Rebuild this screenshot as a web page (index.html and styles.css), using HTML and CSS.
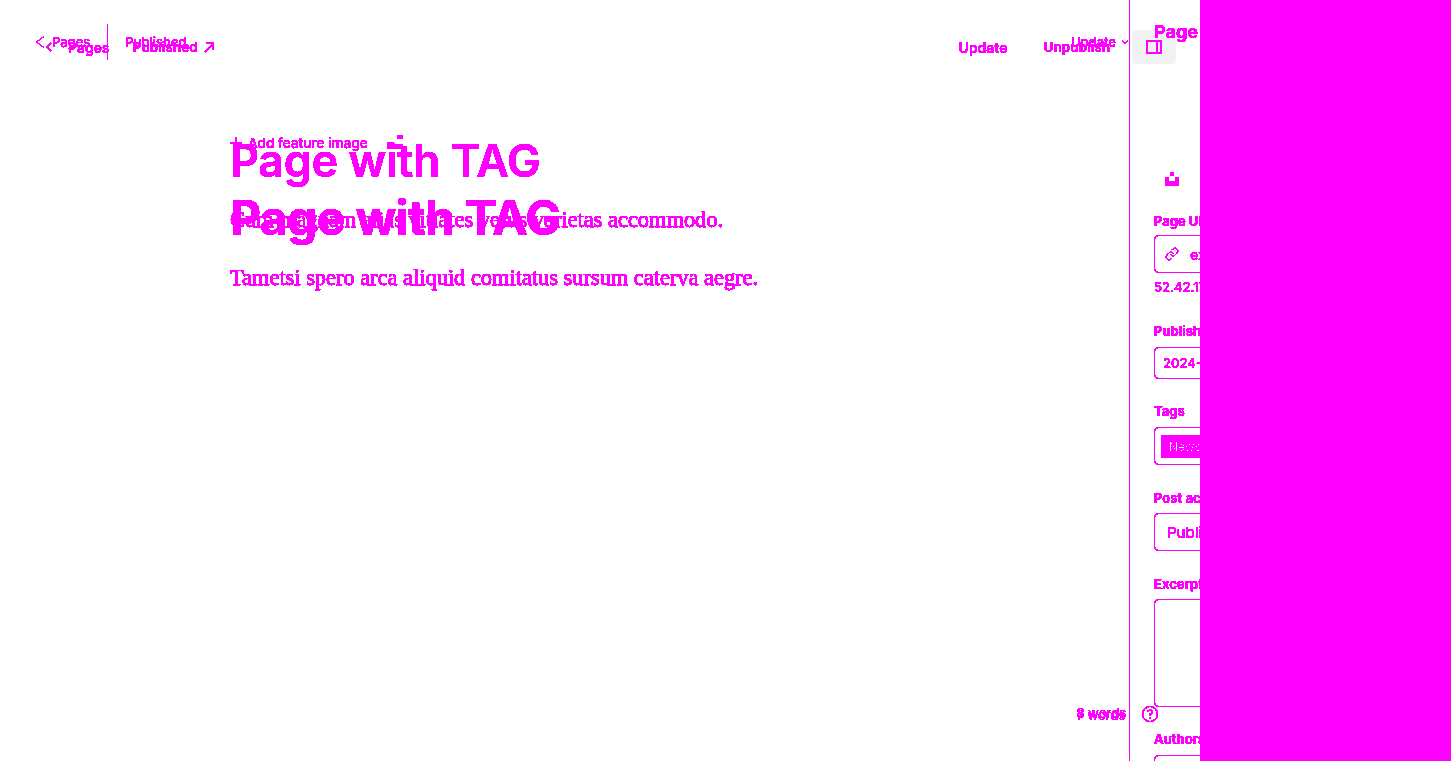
FILE: index.html
```html
<!DOCTYPE html>
<html lang="en">
<head>
<meta charset="UTF-8">
<title>Page with TAG</title>
<link rel="stylesheet" href="styles.css">
</head>
<body>
<!-- hard edges on text and icons, no soft pixels -->
<svg class="defs" width="0" height="0">
    <filter id="crisp" color-interpolation-filters="sRGB" x="0" y="0" width="100%" height="100%">
        <feComponentTransfer>
            <feFuncG type="discrete" tableValues="0 0 0 0 0 0 0 0 0 1"/>
            <feFuncA type="discrete" tableValues="0 1 1 1 1 1 1 1 1 1"/>
        </feComponentTransfer>
    </filter>
</svg>
<div class="page">
    <div class="toggle"></div>

    <!-- first copy of the editor -->
    <div class="layer under">
        <div class="topbar">
            <svg class="ico" width="8" height="10" viewBox="0 0 8 10"><path d="M6 1 L2 5 L6 9"/></svg>
            <span class="crumb">Pages</span>
            <span class="status">Published</span>
            <svg class="ico" width="12" height="12" viewBox="0 0 12 12"><path d="M2 11 L10 3 M3 2 H10 V9"/></svg>
            <span class="grow"></span>
            <span class="action">Update</span>
            <span class="action second">Unpublish</span>
        </div>
        <h1 class="title big">Page with TAG</h1>
    </div>

    <!-- second copy, drawn over the first -->
    <div class="layer over">
        <div class="main">
            <div class="topbar thin">
                <svg class="ico light" width="12" height="16" viewBox="0 0 12 16"><path d="M9 2.5 L1.5 8 L9 13.5"/></svg>
                <span class="crumb">Pages</span>
                <span class="divider"></span>
                <span class="status">Published</span>
                <span class="grow"></span>
                <span class="action">Update</span>
                <svg class="ico light" width="8" height="6" viewBox="0 0 8 6"><path d="M1 1 L4 4.5 L7 1"/></svg>
            </div>
            <div class="editor">
                <div class="add-image">
                    <svg class="ico light" width="12" height="12" viewBox="0 0 12 12"><path d="M6 0 V12 M0 6 H12"/></svg>
                    <span>Add feature image</span>
                    <svg class="upload-small" width="16" height="14" viewBox="0 0 16 14"><path d="M10 0 H16 V4 H10 Z M0 7 H4 V9 H16 V14 H0 Z"/></svg>
                </div>
                <h1 class="title">Page with TAG</h1>
                <p class="body-text">Cum magnam alias vitiates verus varietas accommodo.</p>
                <p class="body-text">Tametsi spero arca aliquid comitatus sursum caterva aegre.</p>
            </div>
            <div class="count">
                <span class="words">8 words</span>
                <span class="words on-top">7 words</span>
                <svg class="ico mid" width="18" height="18" viewBox="0 0 18 18"><circle cx="9" cy="9" r="7.5"/><path d="M6.8 7 A2.2 2.2 0 1 1 9 9.4 V10.6 M9 12.4 V13.6"/></svg>
            </div>
        </div>
        <aside class="sidebar">
            <svg class="ico panel-ico" width="16" height="14" viewBox="0 0 16 14"><rect x="1" y="1" width="14" height="12"/><path d="M11 1 V13"/></svg>
            <h2 class="side-title">Page settings</h2>
            <div class="upload"><svg width="14" height="14" viewBox="0 0 14 14"><path d="M5 0 H9 V4 H5 Z M0 5 H4 V9 H10 V5 H14 V14 H0 Z"/></svg></div>
            <label class="field-label first">Page URL</label>
            <div class="box url">
                <svg class="ico link-ico" width="14" height="14" viewBox="0 0 24 24"><path d="M10 13a5 5 0 0 0 7.54.54l3-3a5 5 0 0 0-7.07-7.07l-1.72 1.71"/><path d="M14 11a5 5 0 0 0-7.54-.54l-3 3a5 5 0 0 0 7.07 7.07l1.71-1.71"/></svg>
                <span>example</span>
            </div>
            <div class="hint">52.42.179.8/page</div>
            <label class="field-label after-hint">Publish date</label>
            <div class="box date"><span>2024-01-01</span></div>
            <label class="field-label">Tags</label>
            <div class="box tags"><span class="tag">News</span></div>
            <label class="field-label low">Post access</label>
            <div class="box access tight"><span>Public</span></div>
            <label class="field-label low">Excerpt</label>
            <div class="box excerpt tight"></div>
            <label class="field-label">Authors</label>
            <div class="box authors"></div>
        </aside>
        <div class="cover"></div>
    </div>
</div>
</body>
</html>
```

FILE: styles.css
```css
html, body {
    margin: 0;
    height: 100%;
    background: #fff;
}
body {
    font-family: Inter, "Liberation Sans", sans-serif;
    color: #f0f;
    overflow: hidden;
}
.defs {
    position: absolute;
}
.page {
    position: relative;
    width: 1451px;
    height: 761px;
    overflow: hidden;
}
.layer {
    position: absolute;
    top: 0;
    left: 0;
    width: 100%;
    height: 100%;
    filter: url(#crisp);
}
.ico {
    fill: none;
    stroke: #f0f;
    stroke-width: 2;
    flex: none;
}
.ico.light {
    stroke-width: 0.9;
}
.ico.mid {
    stroke-width: 1.2;
}
.ico.link-ico {
    stroke-width: 1.6;
}
.grow {
    flex: 1;
}

/* under layer */
.under .topbar {
    display: flex;
    align-items: center;
    height: 20px;
    padding: 37px 341px 0 45px;
    font-size: 13.6px;
    font-weight: 600;
}
.under .crumb {
    margin-left: 15px;
    font-size: 14px;
}
.under .status {
    margin-left: 23px;
    margin-right: 5px;
}
.under .action {
    font-size: 14px;
}
.under .second {
    margin-left: 36px;
    font-size: 13.6px;
}
.title {
    margin: 0;
    font-size: 45px;
    font-weight: 600;
    line-height: 54px;
    letter-spacing: -0.4px;
}
.title.big {
    margin: 134px 0 0 230px;
    font-weight: 700;
    font-size: 48px;
    letter-spacing: -0.65px;
}

/* over layer */
.over {
    display: flex;
}
.main {
    position: relative;
    width: 1129px;
    display: flex;
    flex-direction: column;
}
.thin {
    display: flex;
    align-items: center;
    height: 36px;
    padding: 24px 0 0 35px;
    font-size: 13px;
    font-weight: 500;
}
.thin .crumb {
    margin-left: 5px;
}
.divider {
    width: 1px;
    height: 36px;
    margin: 0 17px;
    background: #f0f;
}
.thin .action {
    margin-right: 5px;
}
.editor {
    padding: 75px 0 0 230px;
}
.add-image {
    display: flex;
    align-items: center;
    gap: 6px;
    height: 16px;
    font-size: 13.6px;
    font-weight: 500;
}
.upload-small {
    margin: -3px 0 0 13px;
    fill: #f0f;
}
.editor .title {
    margin-top: -17px;
}
.body-text {
    margin: 26px 0 0;
    font-family: "Liberation Serif", serif;
    font-size: 22.4px;
    line-height: 32px;
    -webkit-text-stroke: 0.25px #f0f;
}
.title + .body-text {
    margin-top: 16px;
}
.count {
    position: absolute;
    right: -30px;
    top: 705px;
    display: flex;
    align-items: center;
    gap: 15px;
    font-size: 13px;
    font-weight: 400;
    height: 18px;
}
.words {
    margin-top: -2px;
}
.on-top {
    position: absolute;
    left: 0;
    top: 4px;
}
.sidebar {
    position: relative;
    width: 320px;
    box-sizing: border-box;
    padding: 20px 24px;
    border-left: 1px solid #f0f;
    overflow: hidden;
}
.toggle {
    position: absolute;
    left: 1132px;
    top: 30px;
    width: 44px;
    height: 34px;
    background: #f1f2f4;
    border-radius: 4px;
}
.panel-ico {
    position: absolute;
    left: 16px;
    top: 40px;
}
.side-title {
    margin: 0;
    font-size: 18px;
    font-weight: 700;
    line-height: 24px;
}
.upload {
    margin: 128px 0 0 11px;
    height: 14px;
    line-height: 0;
}
.upload svg {
    fill: #f0f;
}
.field-label {
    display: block;
    margin-top: 24px;
    font-size: 13px;
    font-weight: 700;
    line-height: 16px;
}
.field-label.first {
    margin-top: 27px;
}
.field-label.after-hint {
    margin-top: 28px;
}
.field-label.low {
    margin-top: 25px;
}
.box {
    display: flex;
    align-items: center;
    box-sizing: border-box;
    margin-top: 8px;
    border: 1px solid #f0f;
    border-radius: 4px;
    font-size: 14px;
    font-weight: 500;
    white-space: nowrap;
}
.box.tight {
    margin-top: 7px;
}
.url {
    height: 38px;
    margin-top: 6px;
    padding-left: 10px;
    gap: 11px;
}
.hint {
    margin-top: 6px;
    font-size: 13px;
    font-weight: 500;
    line-height: 16px;
}
.date {
    height: 32px;
    padding-left: 8px;
    font-size: 13px;
}
.tags {
    height: 38px;
    padding-left: 6px;
}
.tag {
    padding: 4px 8px;
    background: #f0f;
    color: #fff;
    font-size: 12px;
    font-weight: 400;
    border-radius: 2px;
}
.access {
    height: 38px;
    padding-left: 12px;
    font-size: 15px;
    font-weight: 400;
}
.excerpt {
    height: 108px;
}
.authors {
    height: 38px;
}
.cover {
    position: absolute;
    top: 0;
    right: 0;
    width: 251px;
    height: 100%;
    background: #f0f;
}
```
